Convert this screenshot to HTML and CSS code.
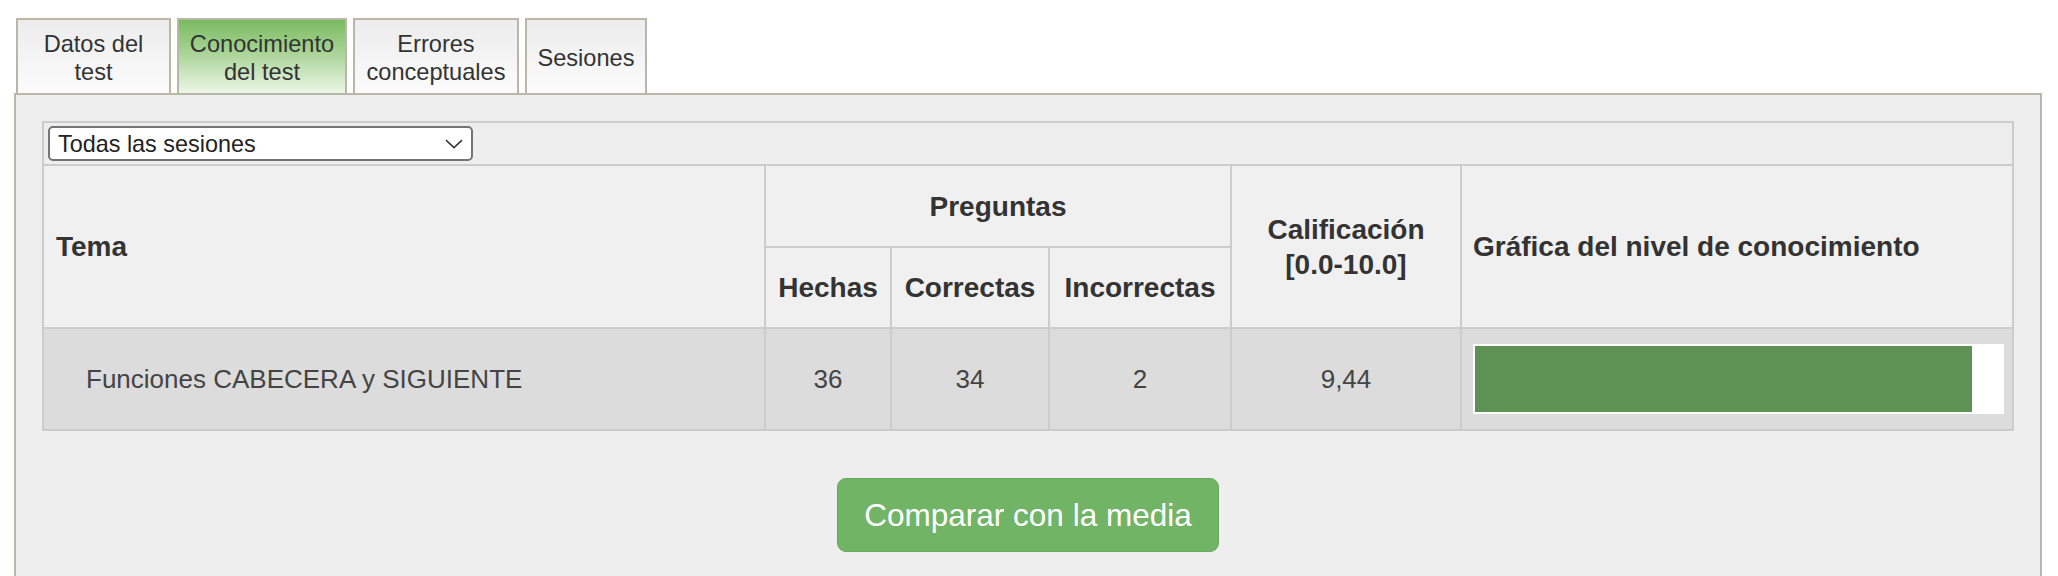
FILE: index.html
```html
<!DOCTYPE html>
<html lang="es">
<head>
<meta charset="utf-8">
<title>Conocimiento del test</title>
<link rel="stylesheet" href="styles.css">
</head>
<body>
<div class="tabs">
  <div class="tab tab-datos">Datos del test</div>
  <div class="tab tab-conoc tab-active">Conocimiento del test</div>
  <div class="tab tab-errores">Errores conceptuales</div>
  <div class="tab tab-sesiones">Sesiones</div>
</div>
<div class="panel">
  <table class="grid">
    <colgroup>
      <col class="c-tema">
      <col class="c-hechas">
      <col class="c-correctas">
      <col class="c-incorrectas">
      <col class="c-calif">
      <col class="c-graph">
    </colgroup>
    <tr class="filter-row">
      <td colspan="6" class="filter-cell">
        <div class="select-wrap">
          <select class="session-select"><option>Todas las sesiones</option></select>
          <svg class="chev" width="18" height="10" viewBox="0 0 18 10"><path d="M1 1.2 L9 8.6 L17 1.2" fill="none" stroke="#3a3a3a" stroke-width="1.6"/></svg>
        </div>
      </td>
    </tr>
    <tr class="head-1">
      <th rowspan="2" class="th-left">Tema</th>
      <th colspan="3">Preguntas</th>
      <th rowspan="2">Calificación<br>[0.0-10.0]</th>
      <th rowspan="2" class="th-left th-graph">Gráfica del nivel de conocimiento</th>
    </tr>
    <tr class="head-2">
      <th>Hechas</th>
      <th>Correctas</th>
      <th>Incorrectas</th>
    </tr>
    <tr class="data-row">
      <td class="td-tema">Funciones CABECERA y SIGUIENTE</td>
      <td>36</td>
      <td>34</td>
      <td>2</td>
      <td>9,44</td>
      <td class="td-graph"><div class="bar-track"><div class="bar-fill" style="width:94.4%"></div></div></td>
    </tr>
  </table>
  <div class="actions">
    <button class="btn-compare">Comparar con la media</button>
  </div>
</div>
</body>
</html>
```
FILE: styles.css
```css
html, body {
  margin: 0;
  padding: 0;
  background: #ffffff;
  font-family: "Liberation Sans", Arial, Helvetica, sans-serif;
  color: #333333;
}

.tabs {
  display: flex;
  gap: 6px;
  padding: 18px 0 0 16px;
}

.tab {
  box-sizing: border-box;
  height: 75px;
  border: 2px solid #b9b8a8;
  border-bottom: none;
  background: linear-gradient(to bottom, #ececec, #fcfcfc);
  font-size: 23.6px;
  line-height: 1.17;
  color: #333333;
  text-align: center;
  display: flex;
  align-items: center;
  justify-content: center;
  padding: 5px 8px 0;
}

.tab-datos { width: 155px; padding: 5px 18px 0; }
.tab-conoc { width: 170px; }
.tab-errores { width: 166px; }
.tab-sesiones { width: 122px; }

.tab-active {
  background: linear-gradient(to bottom, #79bb5f 0%, #a9d496 45%, #ecf6e7 100%);
}

.panel {
  margin: 0 16px 0 14px;
  border: 2px solid #b9b8a8;
  background: #eeeeee;
  padding: 26px 26px 60px;
  min-height: 500px;
}

.grid {
  width: 100%;
  table-layout: fixed;
  border-collapse: collapse;
  border: 2px solid #cccccc;
}

.c-tema { width: 722px; }
.c-hechas { width: 126px; }
.c-correctas { width: 158px; }
.c-incorrectas { width: 182px; }
.c-calif { width: 230px; }
.c-graph { width: 552px; }

.grid th, .grid td {
  border: 2px solid #cccccc;
  padding: 0;
}

.filter-cell {
  background: #eeeeee;
  height: 40px;
  padding: 3px 4px !important;
  box-sizing: border-box;
}

.select-wrap {
  position: relative;
  width: 425px;
  height: 35px;
}

.session-select {
  appearance: none;
  -webkit-appearance: none;
  box-sizing: border-box;
  width: 425px;
  height: 35px;
  border: 2px solid #747474;
  border-radius: 5px;
  background: #ffffff;
  font-family: "Liberation Sans", Arial, sans-serif;
  font-size: 23.4px;
  color: #222222;
  padding: 0 0 0 8px;
  margin: 0;
}

.chev {
  position: absolute;
  right: 10px;
  top: 13px;
  pointer-events: none;
}

.grid th {
  background: #f0f0f0;
  font-size: 28px;
  font-weight: bold;
  line-height: 1.25;
  color: #333333;
  text-align: center;
  vertical-align: middle;
}

.head-1 th { height: 80px; }
.head-2 th { height: 79px; }

.grid .th-left {
  text-align: left;
  padding-left: 12px;
}

.grid .th-graph {
  padding-left: 11px;
}

.data-row td {
  background: #dcdcdc;
  height: 100px;
  font-size: 26px;
  color: #444444;
  text-align: center;
  vertical-align: middle;
}

.grid .td-tema {
  text-align: left;
  padding-left: 42px;
}

.grid .td-graph {
  padding: 0 8px 0 11px;
}

.bar-track {
  box-sizing: border-box;
  height: 70px;
  background: #ffffff;
  padding: 2px;
}

.bar-fill {
  height: 100%;
  background: #5e9255;
}

.actions {
  display: flex;
  justify-content: center;
  padding-top: 47px;
}

.btn-compare {
  box-sizing: border-box;
  height: 74px;
  padding: 0 26px;
  border: 1.5px solid #68aa5c;
  border-radius: 9px;
  background: #72b466;
  color: #ffffff;
  font-family: "Liberation Sans", Arial, sans-serif;
  font-size: 31.5px;
}
```
